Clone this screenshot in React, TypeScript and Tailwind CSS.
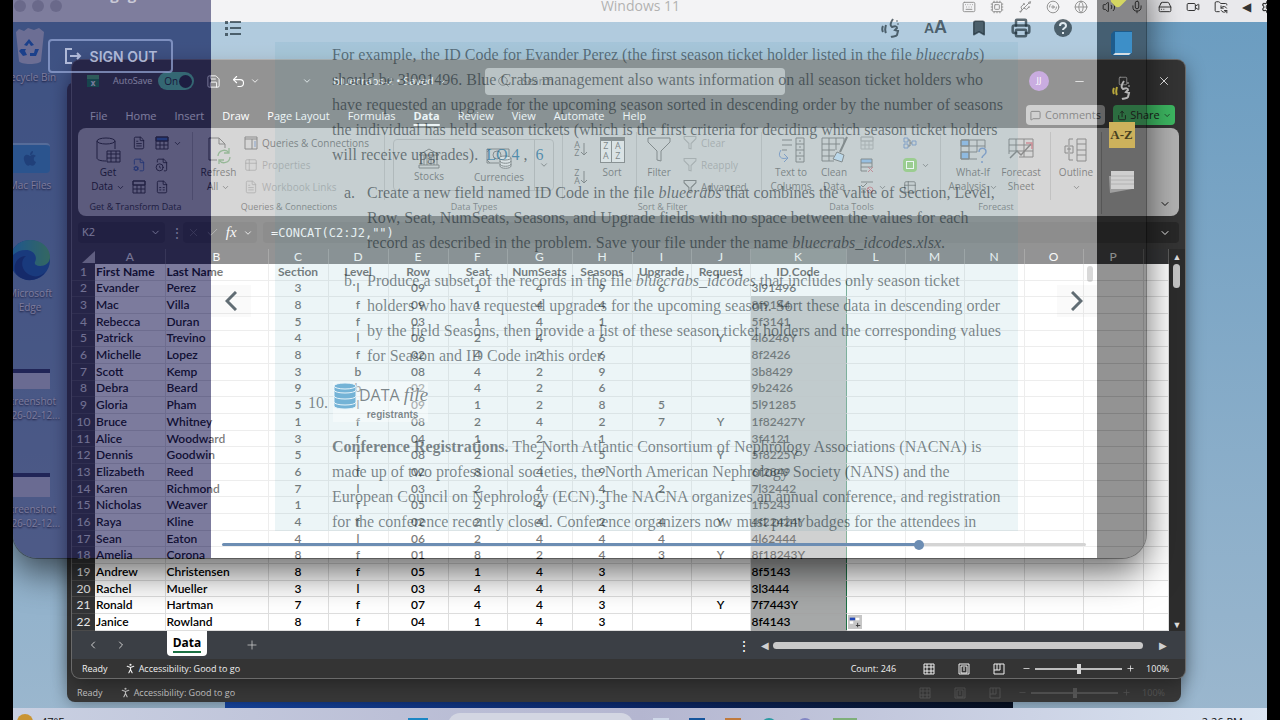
import type { ReactNode } from "react";
import {
    Bookmark, ChevronDown, ChevronLeft, ChevronRight, Cpu, Disc3, FileClock, FileCog, FileSpreadsheet,
    FileText, FolderSync, Globe, HardDrive, Keyboard, LogOut, MessageSquare, Mic, Minus, PersonStanding, Plus, Printer,
    Save, Search, Settings, Share, Table2, Undo2, Usb, Video, Volume2, X, Check, Square,
} from "lucide-react";

const COLUMNS = ["A", "B", "C", "D", "E", "F", "G", "H", "I", "J", "K", "L", "M", "N", "O", "P", ""];

const HEADERS = ["First Name", "Last Name", "Section", "Level", "Row", "Seat", "NumSeats", "Seasons", "Upgrade", "Request", "ID Code"];

const ROWS = [
    ["Evander", "Perez", "3", "l", "09", "1", "4", "9", "6", "", "3l91496"],
    ["Mac", "Villa", "8", "f", "09", "1", "4", "4", "", "", "8f9144"],
    ["Rebecca", "Duran", "5", "f", "03", "1", "4", "1", "", "", "5f3141"],
    ["Patrick", "Trevino", "4", "l", "06", "2", "4", "6", "", "Y", "4l6246Y"],
    ["Michelle", "Lopez", "8", "f", "02", "4", "2", "6", "", "", "8f2426"],
    ["Scott", "Kemp", "3", "b", "08", "4", "2", "9", "", "", "3b8429"],
    ["Debra", "Beard", "9", "b", "02", "4", "2", "6", "", "", "9b2426"],
    ["Gloria", "Pham", "5", "l", "09", "1", "2", "8", "5", "", "5l91285"],
    ["Bruce", "Whitney", "1", "f", "08", "2", "4", "2", "7", "Y", "1f82427Y"],
    ["Alice", "Woodward", "3", "f", "04", "1", "2", "1", "", "", "3f4121"],
    ["Dennis", "Goodwin", "5", "f", "08", "2", "2", "5", "", "Y", "5f8225Y"],
    ["Elizabeth", "Reed", "6", "f", "02", "8", "4", "9", "", "", "6f2849"],
    ["Karen", "Richmond", "7", "l", "03", "2", "4", "4", "2", "", "7l32442"],
    ["Nicholas", "Weaver", "1", "f", "05", "2", "4", "3", "", "", "1f5243"],
    ["Raya", "Kline", "4", "f", "02", "2", "4", "2", "4", "Y", "4f22424Y"],
    ["Sean", "Eaton", "4", "l", "06", "2", "4", "4", "4", "", "4l62444"],
    ["Amelia", "Corona", "8", "f", "01", "8", "2", "4", "3", "Y", "8f18243Y"],
    ["Andrew", "Christensen", "8", "f", "05", "1", "4", "3", "", "", "8f5143"],
    ["Rachel", "Mueller", "3", "l", "03", "4", "4", "4", "", "", "3l3444"],
    ["Ronald", "Hartman", "7", "f", "07", "4", "4", "3", "", "Y", "7f7443Y"],
    ["Janice", "Rowland", "8", "f", "04", "1", "4", "3", "", "", "8f4143"],
];

const TABS = ["File", "Home", "Insert", "Draw", "Page Layout", "Formulas", "Data", "Review", "View", "Automate", "Help"];

/* ---------- icons ---------- */

function Svg({ w, h, children }: { w: number; h: number; children: ReactNode }) {
    return (
        <svg width={w} height={h} viewBox={`0 0 ${w} ${h}`} fill="none" stroke="#262626" strokeWidth="1" className="shrink-0">
            {children}
        </svg>
    );
}

function DatabaseIcon() {
    return (
        <Svg w={26} h={28}>
            <path d="M2 5v17c0 2 4 3 9 3M20 5v8" />
            <ellipse cx="11" cy="5" rx="9" ry="3" />
            <path d="M12 15h13v11H12zM12 18h13M12 22h13M16 15v11M21 15v11" />
        </Svg>
    );
}

function RefreshIcon() {
    return (
        <Svg w={26} h={28}>
            <path d="M11 24H3V2h10l6 6v4M13 2v6h6" />
            <path d="M12 20a6 6 0 0 1 11-3M23 12v5h-5M24 21a6 6 0 0 1-11 3M13 28v-4h5" stroke="#3c7a3e" strokeWidth="1.3" />
        </Svg>
    );
}

function BankIcon() {
    return (
        <Svg w={24} h={22}>
            <path d="M2 8 12 2l10 6zM4 8v10M7 8v10M10 8v10M14 8v10M17 8v10M20 8v10M2 18h20v3H2z" />
        </Svg>
    );
}

function CurrencyIcon() {
    return (
        <Svg w={28} h={24}>
            <path d="M14 17H2V3h22v7" />
            <circle cx="12" cy="9" r="4" />
            <path d="M2 6l3-3M2 14l3 3" />
            <path d="M15 12v8c0 3 11 3 11 0v-8M15 15c0 3 11 3 11 0M15 18c0 3 11 3 11 0" fill="#d8d8d8" />
            <ellipse cx="20" cy="12" rx="6" ry="2" fill="#d8d8d8" />
        </Svg>
    );
}

function SortPair({ top, bottom }: { top: string; bottom: string }) {
    return (
        <span className="flex items-center">
            <span className="flex flex-col text-[9px] leading-[8px]">
                <span>{top}</span>
                <span>{bottom}</span>
            </span>
            <Svg w={8} h={16}>
                <path d="M4 2v12M1 11l3 3 3-3" />
            </Svg>
        </span>
    );
}

function SortBox() {
    return (
        <span className="grid h-[26px] w-[25px] grid-cols-2 border border-t-4 border-[#333] bg-[#dcdcdc] text-center text-[9px] leading-[10px]">
            <span className="border-r border-[#333]">Z<br />A</span>
            <span>A<br />Z</span>
        </span>
    );
}

function FunnelIcon({ size = 26 }: { size?: number }) {
    return (
        <svg width={size} height={size} viewBox="0 0 26 26" fill="none" stroke="#262626" strokeWidth={size > 20 ? 1 : 2}>
            <path d="M2 1h22v4l-9 9v10l-4-1v-9L2 5z" />
        </svg>
    );
}

function ColumnsIcon() {
    return (
        <Svg w={28} h={28}>
            <path d="M5 4h10M5 9h10M5 14h5" />
            <path d="M4 14c-4 6 0 10 6 8M7 18l4 4-4 4" stroke="#1f4e9c" />
            <path d="M19 2h8v24h-8zM19 8h8M19 14h8M19 20h8M22 5h2M22 11h2M22 17h2M22 23h2" />
        </Svg>
    );
}

function CleanIcon() {
    return (
        <Svg w={28} h={28}>
            <path d="M14 25H2V2h22v6M2 8h18M2 14h13M2 20h12M9 2v23M16 2v12" />
            <path d="M27 1 20 16" strokeWidth="2" />
            <path d="m17 16 7 3-2 7-9-3z" fill="#9cc4e4" />
        </Svg>
    );
}

function WhatIfIcon() {
    return (
        <Svg w={28} h={26}>
            <path d="M2 3h8v6H2zM2 15h8v7H2z" fill="#3f86d0" />
            <path d="M2 3h24v8M2 3v19h16M2 9h24M2 15h16M10 3v19M18 3v12" />
            <path d="M20 15c0-5 7-5 7 0 0 3-4 3-4 6M23 24v2" stroke="#1f4e9c" strokeWidth="1.5" />
        </Svg>
    );
}

function ForecastIcon() {
    return (
        <Svg w={28} h={26}>
            <path d="M2 2h24v18H12M2 2v15M2 8h24M2 14h24M9 2v12M17 2v18" />
            <path d="m3 21 7-7 4 4 10-11" strokeWidth="1.5" />
            <path d="M19 6h6v6" stroke="#a32a3a" strokeWidth="1.5" />
        </Svg>
    );
}

function OutlineIcon() {
    return (
        <Svg w={24} h={26}>
            <path d="M9 2H5v6M5 17v6h4M1 9h8v7H1zM5 10v5M3 12h4" />
            <path d="M13 2h9v22h-9zM13 7h9M13 13h9M13 18h9" />
        </Svg>
    );
}

function SmallGrid({ accent = "none" }: { accent?: string }) {
    return (
        <Svg w={14} h={14}>
            <path d="M1 1h12v4H1z" fill={accent} />
            <path d="M1 1h12v12H1zM1 5h12M1 9h12M5 5v8M9 5v8" />
        </Svg>
    );
}

function PaneIcon() {
    return (
        <Svg w={14} h={14}>
            <path d="M1 1h12v12H1zM1 3h12M8 3v10" />
            <path d="M10 6h2M10 8h2M10 10h2" stroke="#1f4e9c" />
        </Svg>
    );
}

function DedupeIcon() {
    return (
        <Svg w={14} h={14}>
            <path d="M1 1h11v4H1z" fill="#4f8fd0" />
            <path d="M1 5v8h6M1 9h11V5" />
            <path d="m8 9 5 5M13 9l-5 5" stroke="#a32a3a" />
        </Svg>
    );
}

function ConsolidateIcon() {
    return (
        <Svg w={14} h={14}>
            <path d="M1 2h4v4H1zM1 8h4v4H1zM9 5h4v4H9z" stroke="#1f4e9c" />
            <path d="M5 4h2v6H5M7 7h2" />
        </Svg>
    );
}

function ValidateIcon() {
    return (
        <Svg w={14} h={14}>
            <path d="M1 2h12M1 5l2 2 4-4M1 9h5M1 12h5" />
            <circle cx="10" cy="10" r="3" stroke="#a32a3a" />
            <path d="m8 8 4 4" stroke="#a32a3a" />
        </Svg>
    );
}

function EdgeLogo() {
    return (
        <svg width="42" height="42" viewBox="0 0 42 42">
            <defs>
                <linearGradient id="edgeTop" x1="0" x2="1">
                    <stop offset="0" stopColor="#1fa6e0" />
                    <stop offset="1" stopColor="#53d06f" />
                </linearGradient>
            </defs>
            <circle cx="21" cy="21" r="20" fill="#1564b4" />
            <path d="M1 21C2 8 11 1 21 1c12 0 20 8 20 17 0 6-5 9-10 9-4 0-6-2-5-4 3-6-2-12-9-12C9 11 3 15 1 21z" fill="url(#edgeTop)" />
            <path d="M17 17c-6 4-5 15 4 19 6 3 12 1 16-4-6 10-20 12-28 5C2 31 6 17 17 17z" fill="#0b3f86" />
        </svg>
    );
}

function RecycleBin() {
    return (
        <svg width="32" height="38" viewBox="0 0 32 38">
            <path d="m2 5 3-3 5 2 4-3 6 2 5-2 5 4-3 29c-1 4-21 4-22 0z" fill="#d9e1ea" />
            <path d="m10 18 5-6 5 6-3 1-2-3-2 3zM7 22h5l-1 2 2 4-4 1-4-5zM25 22l-3 7h-6v-3h4l1-4z" fill="#1873d3" />
        </svg>
    );
}

function SpeakIcon({ wave, face }: { wave: string; face: string }) {
    return (
        <svg width="20" height="20" viewBox="0 0 20 20" fill="none" strokeWidth="2">
            <path d="M2 8c-1 2-1 4 0 6M5 7c-1 3-1 6 0 8" stroke={wave} />
            <path d="M12 1c-3 4-3 7-1 8 3-1 5-1 5 1l-2 2 3 1-1 4c-1 2-4 1-6 2" stroke={face} />
            <path d="M15 3h2M16 6h2" stroke={face} strokeWidth="1" />
        </svg>
    );
}

/* ---------- desktop ---------- */

function DesktopIcon({ label, children }: { label: string; children: ReactNode }) {
    return (
        <div className="flex h-[108px] flex-col items-center gap-[5px]">
            <div className="flex h-[43px] items-end">{children}</div>
            <div className="w-16 text-center text-[10px] leading-[14px] text-white [text-shadow:0_1px_2px_#000]">{label}</div>
        </div>
    );
}

function MenuBar() {
    const icons = [Keyboard, Cpu, Usb, Disc3, Globe, Volume2, Mic, HardDrive, Video, FolderSync];
    return (
        <header className="flex h-[22px] items-start justify-between bg-[#e9e9ec]">
            <div className="flex flex-1 items-center gap-[6px] pl-px">
                <span className="size-3 rounded-full bg-[#b8b8bd]" />
                <span className="size-3 rounded-full bg-[#b8b8bd]" />
                <span className="size-3 rounded-full bg-[#b8b8bd]" />
            </div>
            <h1 className="text-[14px] leading-3 text-[#6d6d6d]">Windows 11</h1>
            <div className="flex flex-1 items-center justify-end gap-[14px] text-[#333]">
                {icons.map((Icon, i) => (
                    <Icon key={i} size={14} strokeWidth={1.7} />
                ))}
                <span className="text-[12px] leading-3">◀</span>
                <Settings size={14} className="-mr-2 -ml-1" />
            </div>
        </header>
    );
}

function Taskbar() {
    return (
        <footer className="absolute inset-x-0 -bottom-7 flex h-10 items-start bg-linear-to-r from-[#c9d0e2] via-[#b4b6d0] to-[#dbe5f2] px-6 pt-[6px] text-[11px] text-[#111]">
            <span className="-ml-5 size-4 rounded-full bg-[#c99432]" />
            <span className="ml-2 leading-4">47°F</span>
            <div className="flex flex-1 items-start justify-center gap-5">
                <span className="mt-1 size-5 bg-[#1b86c4]" />
                <span className="-mt-px h-6 w-[185px] rounded-full bg-[#d3d6e2]" />
                <span className="mt-1 size-4 bg-[#cfd8e8]" />
                <span className="mt-1 size-4 bg-[#15559c]" />
                <span className="mt-1 size-4 bg-[#c07a3c]" />
                <span className="mt-1 size-4 rounded-full bg-[#2b9ba3]" />
                <span className="mt-1 size-4 rounded-full bg-[#8286c4]" />
                <span className="mt-1 h-4 w-6 bg-[#7fb07a]" />
            </div>
            <span className="leading-4">2:26 PM</span>
        </footer>
    );
}

/* ---------- spreadsheet ---------- */

function BigButton({ icon, className, children }: { icon: ReactNode; className: string; children: ReactNode }) {
    return (
        <button className={`flex shrink-0 flex-col items-center pt-[3px] text-[10px] leading-[14px] whitespace-nowrap ${className}`}>
            <span className="flex h-[30px] items-center">{icon}</span>
            <span>{children}</span>
        </button>
    );
}

function SmallButton({ icon, children, faded }: { icon: ReactNode; children?: ReactNode; faded?: boolean }) {
    return (
        <button className={`flex h-[22px] items-center gap-1 whitespace-nowrap text-[10px] ${faded ? "opacity-45" : ""}`}>
            {icon}
            {children}
        </button>
    );
}

function Group({ label, className, children }: { label: string; className: string; children: ReactNode }) {
    return (
        <section className={`flex shrink-0 flex-col pt-1 pb-[2px] ${className}`}>
            <div className="flex flex-1 border-r border-[#8d8d8d]">{children}</div>
            <div className="text-center text-[9px] leading-[14px] text-[#1c1c1c]">{label}</div>
        </section>
    );
}

function Ribbon() {
    const down = <ChevronDown size={9} className="inline shrink-0" />;
    return (
        <div className="mx-[6px] flex h-[88px] shrink-0 overflow-hidden rounded-lg bg-[#b2b2b2] text-[#111]">
            <Group label="Get & Transform Data" className="w-[115px]">
                <BigButton icon={<DatabaseIcon />} className="ml-[10px] w-10">Get<br />Data {down}</BigButton>
                <div className="ml-1 grid grid-cols-[23px_auto] self-start">
                    <SmallButton icon={<FileText size={14} strokeWidth={1.4} />} />
                    <SmallButton icon={<SmallGrid accent="#2b62ad" />}>{down}</SmallButton>
                    <SmallButton icon={<FileCog size={14} strokeWidth={1.4} className="text-[#1f4e9c]" />} />
                    <SmallButton icon={<FileClock size={14} strokeWidth={1.4} />} />
                    <SmallButton icon={<SmallGrid />} />
                    <SmallButton icon={<FileSpreadsheet size={14} strokeWidth={1.4} />} />
                </div>
            </Group>
            <Group label="Queries & Connections" className="w-[192px]">
                <BigButton icon={<RefreshIcon />} className="w-[51px]">Refresh<br />All {down}</BigButton>
                <div>
                    <SmallButton icon={<PaneIcon />}>Queries &amp; Connections</SmallButton>
                    <SmallButton icon={<Table2 size={14} strokeWidth={1.4} />} faded>Properties</SmallButton>
                    <SmallButton icon={<FileText size={14} strokeWidth={1.4} />} faded>Workbook Links</SmallButton>
                </div>
            </Group>
            <Group label="Data Types" className="w-[178px]">
                <div className="mt-[7px] ml-2 flex h-[52px] w-[161px] rounded border border-[#858585]">
                    <button className="flex w-[70px] flex-col items-center justify-center text-[10px] leading-[14px]">
                        <BankIcon />
                        Stocks
                    </button>
                    <button className="flex w-[70px] flex-col items-center justify-center text-[10px] leading-[14px]">
                        <CurrencyIcon />
                        Currencies
                    </button>
                    <button aria-label="More data types" className="flex flex-1 items-center justify-center border-l border-[#858585]">
                        <ChevronDown size={10} />
                    </button>
                </div>
            </Group>
            <Group label="Sort & Filter" className="w-[199px]">
                <div className="flex w-9 flex-col items-center gap-3 pt-[9px]">
                    <SortPair top="A" bottom="Z" />
                    <SortPair top="Z" bottom="A" />
                </div>
                <BigButton icon={<SortBox />} className="w-[26px]">Sort</BigButton>
                <div className="ml-[11px] border-l border-[#8d8d8d]" />
                <BigButton icon={<FunnelIcon />} className="ml-[2px] w-10">Filter</BigButton>
                <div className="ml-1">
                    <SmallButton icon={<FunnelIcon size={14} />} faded>Clear</SmallButton>
                    <SmallButton icon={<FunnelIcon size={14} />} faded>Reapply</SmallButton>
                    <SmallButton icon={<FunnelIcon size={14} />}>Advanced</SmallButton>
                </div>
            </Group>
            <Group label="Data Tools" className="w-[179px]">
                <BigButton icon={<ColumnsIcon />} className="ml-1 w-[50px]">Text to<br />Columns</BigButton>
                <BigButton icon={<CleanIcon />} className="w-9">Clean<br />Data</BigButton>
                <div className="ml-2 grid grid-cols-[43px_auto] self-start">
                    <SmallButton icon={<SmallGrid />} faded />
                    <SmallButton icon={<ConsolidateIcon />} />
                    <SmallButton icon={<DedupeIcon />} />
                    <SmallButton icon={<span className="flex size-[14px] rounded-sm bg-[#5aae2c] p-[3px]"><span className="flex-1 border border-white" /></span>}>{down}</SmallButton>
                    <SmallButton icon={<ValidateIcon />}>{down}</SmallButton>
                    <SmallButton icon={<Table2 size={14} strokeWidth={1.4} />} />
                </div>
            </Group>
            <Group label="Forecast" className="w-[110px]">
                <BigButton icon={<WhatIfIcon />} className="ml-2 w-12">What-If<br />Analysis {down}</BigButton>
                <BigButton icon={<ForecastIcon />} className="w-12">Forecast<br />Sheet</BigButton>
            </Group>
            <Group label="" className="w-[51px]">
                <BigButton icon={<OutlineIcon />} className="w-[50px]">Outline<br />{down}</BigButton>
            </Group>
            <button aria-label="Collapse ribbon" className="flex flex-1 items-end justify-end pr-2 pb-[6px]">
                <ChevronDown size={12} />
            </button>
        </div>
    );
}

function TitleBar() {
    return (
        <div className="flex h-[42px] shrink-0 items-center text-[10px] text-white">
            <div className="flex flex-1 items-center pl-[15px]">
                <span className="flex size-3 items-center justify-center border-t-4 border-[#43b160] bg-[#107c41] text-[8px] font-bold">x</span>
                <label className="ml-[14px] flex items-center gap-[6px] text-[9px]">
                    AutoSave
                    <input type="checkbox" defaultChecked className="sr-only" />
                    <span className="flex h-[18px] w-9 items-center justify-between rounded-full bg-[#55cf9b] pr-[2px] pl-[6px] text-[10px] text-[#111]">
                        On
                        <span className="size-[13px] rounded-full bg-[#1e2024]" />
                    </span>
                </label>
                <Save size={15} strokeWidth={1.5} className="ml-3" />
                <Undo2 size={15} strokeWidth={1.8} className="ml-[10px]" />
                <ChevronDown size={10} className="ml-1" />
                <ChevronDown size={10} className="ml-[42px]" />
                <span className="ml-[21px] flex items-center gap-1 text-[11px]">
                    bluecrabs-2 • Saved <ChevronDown size={9} />
                </span>
            </div>
            <label className="flex h-[27px] w-[300px] items-center gap-3 rounded bg-[#999] px-3 text-[#111]">
                <Search size={13} strokeWidth={1.5} />
                <input placeholder="Search" className="min-w-0 flex-1 outline-none placeholder:text-[#222]" />
            </label>
            <div className="flex w-[400px] items-center justify-end pr-[14px]">
                <span className="mr-6 flex size-5 items-center justify-center rounded-full bg-[#9a63c4] text-[9px]">JJ</span>
                <button aria-label="Minimize"><Minus size={13} strokeWidth={1.3} /></button>
                <button aria-label="Restore" className="ml-8"><Square size={10} /></button>
                <button aria-label="Close" className="ml-[29px]"><X size={14} strokeWidth={1.5} /></button>
            </div>
        </div>
    );
}

function FormulaBar() {
    return (
        <div className="mx-[6px] my-[6px] flex h-[21px] shrink-0 items-center gap-[6px] text-[#f4f4f4]">
            <div className="flex h-full w-[87px] items-center justify-between rounded-sm bg-[#282828] px-1 text-[11px]">
                K2 <ChevronDown size={11} />
            </div>
            <span className="w-[6px] text-center text-[12px]">⋮</span>
            <div className="flex h-full w-[74px] items-center justify-between rounded-sm bg-[#282828] px-1">
                <X size={13} strokeWidth={1.2} className="text-[#777]" />
                <Check size={13} strokeWidth={1.2} className="text-[#999]" />
                <span className="font-['Liberation_Serif',serif] text-[15px] italic">fx</span>
                <ChevronDown size={10} />
            </div>
            <div className="flex h-full flex-1 items-center rounded-sm bg-[#282828] px-2">
                <input
                    aria-label="Formula"
                    defaultValue={'=CONCAT(C2:J2,"")'}
                    className="min-w-0 flex-1 font-['DejaVu_Sans_Mono',monospace] text-[12px] outline-none"
                />
                <ChevronDown size={12} />
            </div>
        </div>
    );
}

function AutoFillButton() {
    return (
        <button aria-label="Auto fill options" className="flex">
            <svg width="14" height="14" viewBox="0 0 16 16">
                <path d="M0 0h16v16H0z" fill="#c6c6c6" />
                <path d="M2 3h6v3H2z" fill="#2449b8" />
                <path d="M9 3h4v3H9zM2 7h4v3H2z" fill="#fff" />
                <path d="M11 9v5M9 12h5" stroke="#333" />
            </svg>
        </button>
    );
}

function Sheet() {
    return (
        <div className="flex min-h-0 flex-1">
            <table className="h-full w-full flex-1 table-fixed bg-white font-[Lato,sans-serif] text-[12px] leading-[14px] text-black">
                <colgroup>
                    <col className="w-[23px]" />
                    <col className="w-[70px]" />
                    <col className="w-[103px]" />
                    <col className="w-[60px]" />
                    <col className="w-[60px]" />
                    <col className="w-[60px]" />
                    <col className="w-[59px]" />
                    <col className="w-[65px]" />
                    <col className="w-[60px]" />
                    <col className="w-[59px]" />
                    <col className="w-[59px]" />
                    <col className="w-[96px]" />
                    <col className="w-[59px]" />
                    <col className="w-[59px]" />
                    <col className="w-[60px]" />
                    <col className="w-[59px]" />
                    <col className="w-[60px]" />
                    <col />
                </colgroup>
                <thead>
                    <tr className="bg-[#333436] leading-[15px] text-[#f4f4f4]">
                        <th className="p-0">
                            <svg width="13" height="12" className="ml-auto"><path d="M13 0v12H0z" fill="#bdbdbd" /></svg>
                        </th>
                        {COLUMNS.map((c, i) => (
                            <th key={i} className={`border-r border-[#5c5c5c] p-0 font-normal ${c === "K" ? "bg-[#474d4a]" : ""}`}>{c}</th>
                        ))}
                    </tr>
                </thead>
                <tbody>
                    {[HEADERS, ...ROWS].map((row, r) => (
                        <tr key={r}>
                            <th className="border-b border-[#4a4a4a] bg-[#333436] p-0 font-normal text-[#e8e8e8]">{r + 1}</th>
                            {COLUMNS.map((_, c) => {
                                const left = c < 2 || (c >= 10 && r > 0);
                                return (
                                    <td
                                        key={c}
                                        className={`border-b p-0 whitespace-nowrap ${left ? "pl-px text-left" : "text-center"} ${r === 0 ? "font-bold" : "font-semibold"} ${
                                            c === 10 && r > 0
                                                ? "border-x border-x-[#1c7145] border-b-[#a5a5a5] " + (r > 1 ? "bg-[#a6a8a8]" : "border-t border-t-[#1c7145]")
                                                : "border-r border-[#dedede]"
                                        }`}
                                    >
                                        {r === 21 && c === 11 ? <AutoFillButton /> : row[c]}
                                    </td>
                                );
                            })}
                        </tr>
                    ))}
                </tbody>
            </table>
            <div className="flex w-4 flex-col items-center justify-between bg-[#2c2c2c] pt-[2px] text-[9px] leading-3 text-[#dcdcdc]">
                <div className="flex flex-col items-center gap-[1px]">
                    ▲
                    <span className="h-6 w-[7px] rounded-full bg-[#c4c4c4]" />
                </div>
                ▼
            </div>
        </div>
    );
}

function SheetTabs() {
    return (
        <div className="flex h-7 shrink-0 items-center bg-[#3b3f45] text-[#d0d0d0]">
            <ChevronLeft size={12} className="ml-[15px]" />
            <ChevronRight size={12} className="ml-4" />
            <button className="ml-10 flex h-[25px] w-10 items-center justify-center self-start rounded-b bg-white text-[12px] font-bold text-black">
                <span className="border-b-2 border-[#1c7145] leading-[17px]">Data</span>
            </button>
            <Plus size={14} strokeWidth={1.3} className="ml-[38px]" />
            <div className="flex flex-1 items-center justify-end pr-[18px] text-[10px]">
                <span className="mr-[10px] text-[14px] text-white">⋮</span>
                ◀
                <span className="mr-4 ml-1 h-[7px] w-[370px] rounded-full bg-[#c9c9c9]" />
                ▶
            </div>
        </div>
    );
}

function ViewIcon({ d }: { d: string }) {
    return (
        <svg width="12" height="12" viewBox="0 0 12 12" fill="none" stroke="currentColor">
            <path d={d} />
        </svg>
    );
}

function StatusBar({ dim }: { dim?: boolean }) {
    return (
        <div className={`flex h-[19px] shrink-0 items-center pr-4 pl-[10px] text-[9px] ${dim ? "text-[#c4c4c4]" : "text-[#f0f0f0]"}`}>
            <span>Ready</span>
            <PersonStanding size={13} className="mr-[2px] ml-4" />
            <span>Accessibility: Good to go</span>
            <div className={`flex flex-1 items-center justify-end ${dim ? "opacity-20" : ""}`}>
                {!dim && <span className="mr-[27px]">Count: 246</span>}
                <span className="mr-[23px]"><ViewIcon d="M1 1h10v10H1zM1 4h10M1 8h10M4 1v10M8 1v10" /></span>
                <span className="mr-[23px]"><ViewIcon d="M1 1h10v10H1zM3 3h6v7H3zM5 5h2M5 7h2" /></span>
                <span className="mr-[17px]"><ViewIcon d="M1 1h10v10H1zM1 7h6M4 1v6M7 1v6" /></span>
                <Minus size={9} />
                <input
                    type="range"
                    aria-label="Zoom"
                    defaultValue={50}
                    className="mx-1 h-[2px] w-[87px] appearance-none bg-[#bdbdbd] [&::-webkit-slider-thumb]:h-[10px] [&::-webkit-slider-thumb]:w-1 [&::-webkit-slider-thumb]:appearance-none [&::-webkit-slider-thumb]:bg-[#d6d6d6]"
                />
                <Plus size={9} />
                <span className="ml-[11px]">100%</span>
            </div>
        </div>
    );
}

function SpreadsheetWindow() {
    return (
        <section className="absolute top-[60px] right-[82px] bottom-[42px] left-[59px] flex flex-col overflow-hidden rounded-lg bg-[#343434] shadow-[0_0_0_1px_#6a6a6a,0_4px_20px_#0006]">
            <TitleBar />
            <div className="flex h-[26px] shrink-0 items-start justify-between pr-[10px] pl-[18px] text-[11px] text-white">
                <nav className="flex gap-[18px] leading-7">
                    {TABS.map((tab) => (
                        <button key={tab} className={tab === "Data" ? "font-bold underline decoration-2 underline-offset-4" : ""}>{tab}</button>
                    ))}
                </nav>
                <div className="flex gap-2 pt-[3px] text-[#1a1a1a]">
                    <button className="flex h-5 w-[79px] items-center gap-1 rounded bg-[#a6a6a6] px-1"><MessageSquare size={11} />Comments</button>
                    <button className="flex h-5 w-[62px] items-center gap-[3px] rounded bg-[#3db862] px-1"><Share size={11} />Share<ChevronDown size={9} /></button>
                </div>
            </div>
            <Ribbon />
            <FormulaBar />
            <Sheet />
            <SheetTabs />
            <StatusBar />
        </section>
    );
}

/* ---------- reader ---------- */

function ReaderPage() {
    return (
        <article className="mr-[79px] ml-16 h-[489px] overflow-hidden bg-[#288caa]/9 pl-[57px] font-['Liberation_Serif',serif] text-[16px] leading-[25px] whitespace-nowrap text-[#0a161c]/52">
            <p>
                For example, the ID Code for Evander Perez (the first season ticket holder listed in the file <i>bluecrabs</i>)<br />
                should be 3l091496. Blue Crabs management also wants information on all season ticket holders who<br />
                have requested an upgrade for the upcoming season sorted in descending order by the number of seasons<br />
                the individual has held season tickets (which is the first criteria for deciding which season ticket holders<br />
                will receive upgrades). &nbsp;<a href="#lo4" className="text-[#1c6f9c]/70">LO 4</a> , &nbsp;<a href="#lo6" className="text-[#1c6f9c]/70">6</a>
            </p>
            <ol className="mt-[13px] ml-3 flex flex-col gap-[13px]">
                <li className="flex">
                    <span className="w-[23px]">a.</span>
                    <p>
                        Create a new field named ID Code in the file <i>bluecrabs</i> that combines the value of Section, Level,<br />
                        Row, Seat, NumSeats, Seasons, and Upgrade fields with no space between the values for each<br />
                        record as described in the problem. Save your file under the name <i>bluecrabs_idcodes.xlsx</i>.
                    </p>
                </li>
                <li className="flex">
                    <span className="w-[23px]">b.</span>
                    <p>
                        Produce a subset of the records in the file <i>bluecrabs_idcodes</i> that includes only season ticket<br />
                        holders who have requested upgrades for the upcoming season. Sort these data in descending order<br />
                        by the field Seasons, then provide a list of these season ticket holders and the corresponding values<br />
                        for Season and ID Code in this order.
                    </p>
                </li>
            </ol>
            <div className="mt-[14px] -ml-6 flex h-10 items-center">
                <span className="w-[25px]">10.</span>
                <div className="flex h-full items-start bg-white/40 font-['Open_Sans',sans-serif]">
                    <svg width="24" height="28" viewBox="0 0 24 28" fill="#74b3d6" stroke="#e8f4fa">
                        <path d="M1 21v3c0 4 22 4 22 0v-3M1 15v5c0 4 22 4 22 0v-5M1 9v5c0 4 22 4 22 0V9M1 4v4c0 4 22 4 22 0V4" />
                        <ellipse cx="12" cy="4" rx="11" ry="3" />
                    </svg>
                    <div className="flex flex-col items-center leading-[26px]">
                        <span className="pl-[2px]">DATA <i className="font-['Liberation_Serif',serif] text-[19px]">file</i></span>
                        <b className="font-['Liberation_Sans',sans-serif] text-[10px] leading-[14px]">registrants</b>
                    </div>
                </div>
            </div>
            <p className="mt-3">
                <b>Conference Registrations.</b> The North Atlantic Consortium of Nephrology Associations (NACNA) is<br />
                made up of two professional societies, the North American Nephrology Society (NANS) and the<br />
                European Council on Nephrology (ECN). The NACNA organizes an annual conference, and registration<br />
                for the conference recently closed. Conference organizers now must print badges for the attendees in
            </p>
        </article>
    );
}

function ReaderWindow() {
    return (
        <section className="absolute -top-7 right-[121px] bottom-[162px] left-0 flex overflow-hidden rounded-b-3xl shadow-[0_0_0_1px_#0005,0_14px_36px_#0009]">
            <aside className="w-[198px] shrink-0 bg-[#1e1b57]/58">
                <div className="flex h-[50px] items-start bg-white/8 pt-[14px] pl-[79px] text-[15px] leading-4 font-bold text-white/60">Engage</div>
                <button className="mt-[17px] ml-[35px] flex h-[34px] w-[125px] items-center justify-center gap-2 rounded-sm border-2 border-[#98a9d8]/70 font-[Inter,sans-serif] text-[14px] font-semibold text-[#c3cbe6]/85">
                    <svg width="18" height="18" viewBox="0 0 18 18" fill="none" stroke="currentColor" strokeWidth="2">
                        <path d="M8 2H2v14h6M6 9h10M13 6l3 3-3 3" />
                    </svg>
                    SIGN OUT
                </button>
            </aside>
            <main className="flex min-w-0 flex-1 flex-col bg-white/47 text-[#20303a]/70">
                <div className="mt-[41px] flex h-[29px] shrink-0 items-center px-[13px] [&_svg]:shrink-0">
                    <svg width="18" height="18" viewBox="0 0 18 18" fill="currentColor">
                        <path d="M1 2h3v3H1zM6 2h11v2H6zM1 8h3v3H1zM6 8h11v2H6zM1 14h3v3H1zM6 14h11v2H6z" />
                    </svg>
                    <div className="ml-auto flex items-center gap-[23px] pr-3">
                        <SpeakIcon wave="currentColor" face="currentColor" />
                        <span className="font-['Liberation_Sans',sans-serif] text-[14px] leading-5 font-bold">A<span className="text-[18px]">A</span></span>
                        <Bookmark size={18} fill="currentColor" />
                        <Printer size={20} strokeWidth={3} />
                        <svg width="18" height="18" viewBox="0 0 18 18" fill="none">
                            <circle cx="9" cy="9" r="9" fill="currentColor" />
                            <path d="M6 7c0-4 6-4 6 0 0 2-3 2-3 4M9 13v2" stroke="#dfe9ef" strokeWidth="2" />
                        </svg>
                    </div>
                </div>
                <div className="relative">
                    <ReaderPage />
                    <button aria-label="Previous page" className="absolute top-[243px] left-0 flex h-8 w-10 items-center justify-center bg-black/2">
                        <svg width="12" height="20" viewBox="0 0 12 20" fill="none" stroke="currentColor" strokeWidth="3"><path d="M11 1 2 10l9 9" /></svg>
                    </button>
                    <button aria-label="Next page" className="absolute top-[243px] right-0 flex h-8 w-10 items-center justify-center bg-black/2">
                        <svg width="12" height="20" viewBox="0 0 12 20" fill="none" stroke="currentColor" strokeWidth="3"><path d="m1 1 9 9-9 9" /></svg>
                    </button>
                    <span className="absolute top-56 right-1 h-4 w-[6px] rounded-sm bg-black/15" />
                </div>
                <input
                    type="range"
                    aria-label="Reading position"
                    defaultValue={81}
                    className="mx-[11px] mt-3 h-[3px] appearance-none rounded-full bg-linear-to-r from-[#6c8db3] from-81% to-[#d4d4d4] to-81% [&::-webkit-slider-thumb]:size-[10px] [&::-webkit-slider-thumb]:appearance-none [&::-webkit-slider-thumb]:rounded-full [&::-webkit-slider-thumb]:bg-[#6c8db3]"
                />
            </main>
            <div className="flex w-[49px] shrink-0 flex-col items-center gap-[22px] bg-[#1a1a1a]/47 pt-3">
                <span className="h-6 w-3 rotate-45 rounded bg-[#d4d662]" />
                <svg width="24" height="28" viewBox="0 0 24 28">
                    <path d="m1 4 3-3h18v22l-3 3H4l-3-2z" fill="#1e5c8c" />
                    <path d="M5 2h17v21H5z" fill="#3d8fc8" />
                    <path d="m3 25 2-2h16l-2 2z" fill="#d5dde2" />
                </svg>
                <SpeakIcon wave="#b8a83c" face="#b5b5b5" />
                <span className="flex size-[26px] items-center justify-center bg-[#cdb25c] font-['Liberation_Serif',serif] text-[13px] font-bold text-[#47401f]">A-Z</span>
                <svg width="26" height="24" viewBox="0 0 26 24">
                    <path d="m0 6 25 0-2 13L1 23z" fill="#9f9f9f" />
                    <path d="M2 1h23v18H2z" fill="#cfcfcf" />
                    <path d="M2 6h23M2 10h23M2 14h23" stroke="#b2b2b2" />
                </svg>
            </div>
        </section>
    );
}

export default function App() {
    return (
        <div className="h-screen overflow-hidden bg-black px-[13px] font-['Open_Sans',sans-serif]">
            <div className="relative h-full overflow-hidden bg-linear-to-b from-[#6a9cc0] to-[#9bb7ce]">
                <MenuBar />
                <div className="-ml-[15px] w-16">
                    <DesktopIcon label="Recycle Bin"><RecycleBin /></DesktopIcon>
                    <DesktopIcon label="Mac Files">
                        <span className="flex h-[30px] w-10 items-center justify-center rounded-sm border-t-2 border-[#a5dcf5] bg-[#3fa3dc]">
                            <svg width="14" height="16" viewBox="0 0 14 16" fill="#2473ab">
                                <path d="M7 5C3 2 0 5 1 9c1 4 3 7 6 5 3 2 5 0 6-3-3-1-3-5 0-6-2-2-4-2-6 0zM7 4c0-2 1-4 3-4 0 2-1 4-3 4z" />
                            </svg>
                        </span>
                    </DesktopIcon>
                    <DesktopIcon label="Microsoft Edge"><EdgeLogo /></DesktopIcon>
                    <DesktopIcon label="Screenshot 2026-02-12...">
                        <span className="h-5 w-10 border-t-4 border-[#26345a] bg-[#d5d9e4]" />
                    </DesktopIcon>
                    <DesktopIcon label="Screenshot 2026-02-12...">
                        <span className="h-6 w-10 border-t-4 border-[#26345a] bg-[#d5d9e4]" />
                    </DesktopIcon>
                </div>
                <div className="absolute right-[254px] bottom-3 left-[212px] h-2 bg-linear-to-r from-[#1747a5] via-[#0d2c74] to-[#071022]" />
                <section className="absolute top-[82px] right-[86px] bottom-[18px] left-[54px] flex flex-col justify-end rounded-lg bg-[#373737] shadow-[0_2px_16px_#0005]">
                    <StatusBar dim />
                </section>
                <SpreadsheetWindow />
                <Taskbar />
                <ReaderWindow />
            </div>
        </div>
    );
}
